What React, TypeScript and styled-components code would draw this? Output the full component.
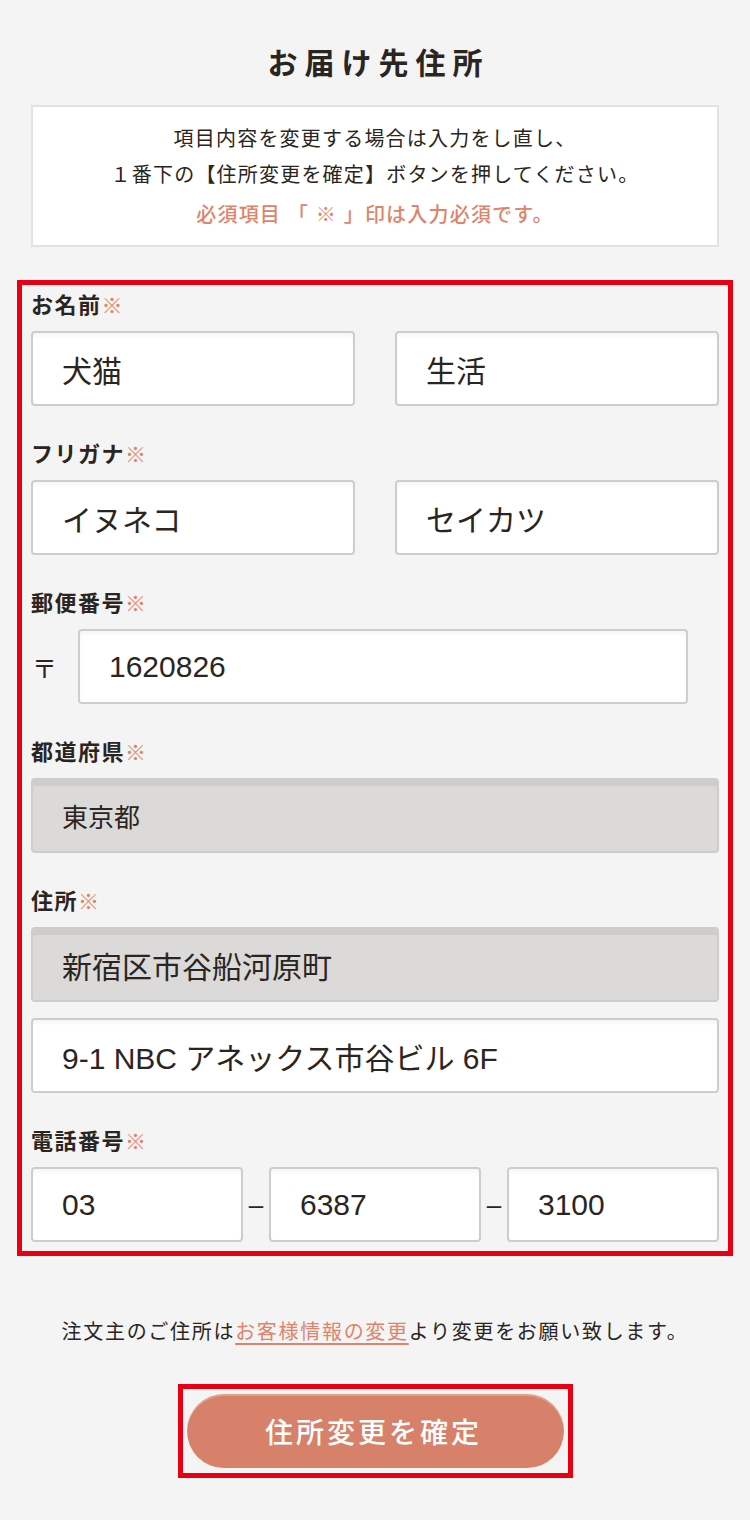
import React from 'react';
import styled, { createGlobalStyle } from 'styled-components';

//Styles:
const GlobalStyle = createGlobalStyle`
    html, body {
        margin: 0;
        padding: 0;
        background: #f4f4f4;
    }
    body {
        font-family: 'Liberation Sans', 'Noto Sans CJK JP', sans-serif;
        color: #2b2521;
    }
`;

const Page = styled.div`
    width: 750px;
    box-sizing: border-box;
    padding: 42px 17px 40px;
`;

const Title = styled.h1`
    margin: 0 0 19px;
    font-size: 30px;
    line-height: 44px;
    font-weight: 700;
    letter-spacing: 7px;
    text-align: center;
    padding-left: 7px;
`;

const InfoBox = styled.div`
    margin: 0 14px;
    padding: 14px 10px 12px;
    background: #ffffff;
    border: 2px solid #e2e2e2;
    text-align: center;
    font-size: 20px;
    line-height: 36px;
    letter-spacing: 1.2px;
`;

const InfoLine = styled.p<{ $accent?: boolean }>`
    margin: ${(p) => (p.$accent ? '4px 0 0' : '0')};
    color: ${(p) => (p.$accent ? '#e0836b' : '#2b2521')};
    font-weight: ${(p) => (p.$accent ? 500 : 400)};
`;

const FormFrame = styled.div`
    margin-top: 33px;
    border: 5px solid #e60012;
    padding: 6px 9px 9px;
    display: flex;
    flex-direction: column;
    gap: 34px;
`;

const Field = styled.div`
    display: flex;
    flex-direction: column;
`;

const Label = styled.div`
    font-size: 22px;
    line-height: 30px;
    font-weight: 700;
    letter-spacing: 1.5px;
    margin-bottom: 10px;
`;

const Required = styled.span`
    color: #e0836b;
    font-size: 21px;
    font-weight: 700;
    letter-spacing: 0;
`;

const Stack = styled.div`
    display: flex;
    flex-direction: column;
    gap: 16px;
`;

const PairRow = styled.div`
    display: grid;
    grid-template-columns: 1fr 1fr;
    gap: 40px;
`;

const TelRow = styled.div`
    display: grid;
    grid-template-columns: 1fr 26px 1fr 26px 1fr;
    align-items: center;
`;

const Dash = styled.span`
    font-size: 26px;
    text-align: center;
    line-height: 1;
`;

const PostalRow = styled.div`
    display: flex;
    align-items: center;
`;

const PostalMark = styled.span`
    width: 47px;
    font-size: 25px;
    padding-left: 1px;
    box-sizing: border-box;
`;

const TextInput = styled.input<{ $locked?: boolean; $small?: boolean; $width?: number }>`
    box-sizing: border-box;
    width: ${(p) => (p.$width ? `${p.$width}px` : '100%')};
    min-width: 0;
    height: 75px;
    padding: 0 0 0 29px;
    border: 2px solid #cdcdcd;
    border-radius: 4px;
    background: ${(p) => (p.$locked ? '#dbdad9' : '#ffffff')};
    box-shadow: ${(p) =>
        p.$locked
            ? 'inset 0 6px 0 rgba(0, 0, 0, 0.06)'
            : 'inset 0 4px 3px rgba(0, 0, 0, 0.03)'};
    font-family: 'Liberation Sans', 'Noto Sans CJK JP', sans-serif;
    font-size: ${(p) => (p.$small ? '26px' : '30px')};
    color: #2b2521;
    outline: none;
`;

const Note = styled.p`
    margin: 58px 0 0;
    text-align: center;
    font-size: 20px;
    line-height: 36px;
    letter-spacing: 1.7px;
`;

const NoteLink = styled.a`
    color: #e0836b;
    text-decoration: underline;
    text-underline-offset: 4px;
`;

const ButtonWrap = styled.div`
    display: flex;
    justify-content: center;
    margin-top: 34px;
`;

const ButtonFrame = styled.div`
    border: 5px solid #e60012;
    padding: 5px 4px;
`;

const SubmitButton = styled.button`
    display: block;
    width: 377px;
    height: 74px;
    border: none;
    border-radius: 37px;
    background: #d7816a;
    box-shadow: inset 0 2px 0 rgba(255, 255, 255, 0.25);
    color: #ffffff;
    font-family: 'Liberation Sans', 'Noto Sans CJK JP', sans-serif;
    font-size: 28px;
    font-weight: 500;
    letter-spacing: 3px;
    padding-left: 3px;
    cursor: pointer;
`;

//Component:
const RequiredLabel = ({ text }: { text: string }): JSX.Element => (
    <Label>
        {text}
        <Required>※</Required>
    </Label>
);

const App = (): JSX.Element => {
    return (
        <Page>
            <GlobalStyle />
            <Title>お届け先住所</Title>
            <InfoBox>
                <InfoLine>項目内容を変更する場合は入力をし直し、</InfoLine>
                <InfoLine>１番下の【住所変更を確定】ボタンを押してください。</InfoLine>
                <InfoLine $accent>必須項目 「 ※ 」印は入力必須です。</InfoLine>
            </InfoBox>

            <FormFrame>
                <Field>
                    <RequiredLabel text="お名前" />
                    <PairRow>
                        <TextInput defaultValue="犬猫" />
                        <TextInput defaultValue="生活" />
                    </PairRow>
                </Field>

                <Field>
                    <RequiredLabel text="フリガナ" />
                    <PairRow>
                        <TextInput defaultValue="イヌネコ" />
                        <TextInput defaultValue="セイカツ" />
                    </PairRow>
                </Field>

                <Field>
                    <RequiredLabel text="郵便番号" />
                    <PostalRow>
                        <PostalMark>〒</PostalMark>
                        <TextInput defaultValue="1620826" $width={610} />
                    </PostalRow>
                </Field>

                <Field>
                    <RequiredLabel text="都道府県" />
                    <TextInput defaultValue="東京都" $locked $small readOnly />
                </Field>

                <Field>
                    <RequiredLabel text="住所" />
                    <Stack>
                        <TextInput defaultValue="新宿区市谷船河原町" $locked readOnly />
                        <TextInput defaultValue="9-1 NBC アネックス市谷ビル 6F" />
                    </Stack>
                </Field>

                <Field>
                    <RequiredLabel text="電話番号" />
                    <TelRow>
                        <TextInput defaultValue="03" />
                        <Dash>–</Dash>
                        <TextInput defaultValue="6387" />
                        <Dash>–</Dash>
                        <TextInput defaultValue="3100" />
                    </TelRow>
                </Field>
            </FormFrame>

            <Note>
                注文主のご住所は<NoteLink href="#">お客様情報の変更</NoteLink>より変更をお願い致します。
            </Note>

            <ButtonWrap>
                <ButtonFrame>
                    <SubmitButton type="button">住所変更を確定</SubmitButton>
                </ButtonFrame>
            </ButtonWrap>
        </Page>
    );
};

export default App;
